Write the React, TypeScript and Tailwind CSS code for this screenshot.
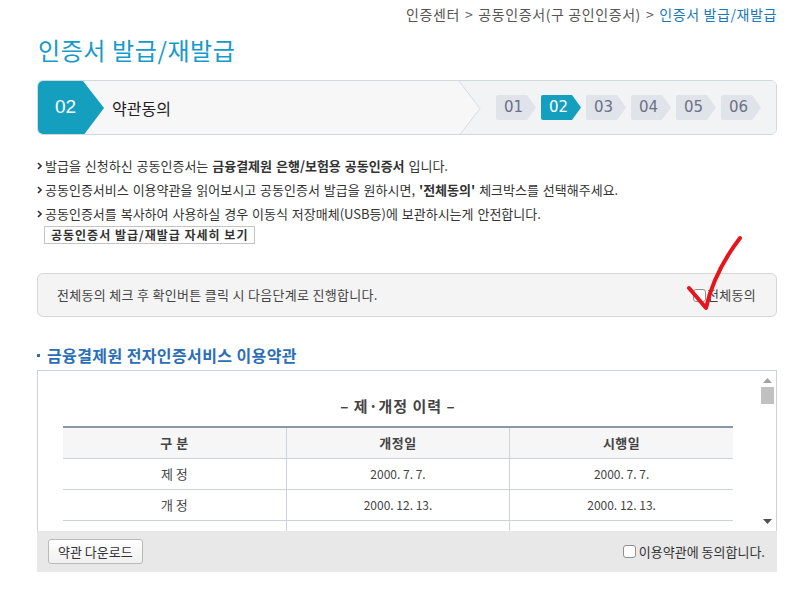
import React from 'react'

const FONT = "font-['Noto_Sans_CJK_KR','Noto_Sans',sans-serif]"

function StepBadge({ n, active }: { n: string; active?: boolean }) {
  return (
    <div className="relative w-[40px] h-[25px]">
      <svg width="40" height="25" className="absolute inset-0">
        <path d="M2 0 H31 L40 12.5 L31 25 H2 Q0 25 0 23 V2 Q0 0 2 0 Z" fill={active ? '#149fbf' : '#e0e3ea'} />
      </svg>
      <span
        className={`relative block pl-[8px] leading-[25px] text-[15px] font-['DejaVu_Sans',sans-serif] ${active ? 'text-white' : 'text-[#6b7186]'}`}
      >
        {n}
      </span>
    </div>
  )
}

function Bullet({ children }: { children: React.ReactNode }) {
  return (
    <li className="flex items-center h-[24px]">
      <svg width="5" height="8" className="mr-[3px] shrink-0">
        <path d="M1 1 L4 4 L1 7" fill="none" stroke="#333" strokeWidth="1.6" />
      </svg>
      <span>{children}</span>
    </li>
  )
}

function Checkbox() {
  return <span className="inline-block w-[13px] h-[13px] rounded-[3px] border border-[#8f8f8f] bg-white shrink-0" />
}

const rows = [
  ['제 정', '2000. 7. 7.', '2000. 7. 7.'],
  ['개 정', '2000. 12. 13.', '2000. 12. 13.'],
  ['', '', ''],
]

export default function App() {
  return (
    <div className={`relative w-[794px] h-[600px] bg-white overflow-hidden text-[#333] ${FONT}`}>
      <div className="ml-[37px] w-[740px]">
        {/* breadcrumb */}
        <div className="flex justify-end items-center h-[28px] text-[14px] tracking-[0.6px] text-[#555]">
          <span>인증센터</span>
          <span className="mx-[5px]">&gt;</span>
          <span>공동인증서(구 공인인증서)</span>
          <span className="mx-[5px]">&gt;</span>
          <span className="text-[#1a78b8]">인증서 발급/재발급</span>
        </div>

        <h1 className="mt-[7px] h-[30px] leading-[30px] text-[24px] tracking-[0.6px] text-[#169ac8] pl-[1px]">인증서 발급/재발급</h1>

        {/* step bar */}
        <div className="mt-[15px] flex h-[55px] rounded-[6px] border border-[#d3d8df] overflow-hidden">
          <div className="flex-1 flex items-center bg-[#f7f7f7]">
            <div className="relative w-[66px] h-full shrink-0">
              <svg width="66" height="55" className="absolute inset-0">
                <path d="M0 0 H45 L66 27 L45 55 H0 Z" fill="#149fbf" />
              </svg>
              <span className="relative flex h-full items-center pl-[17px] text-white text-[19px] font-['Liberation_Sans',sans-serif]">02</span>
            </div>
            <span className="ml-[8px] text-[16px] text-[#222]">약관동의</span>
          </div>
          <svg width="24" height="55" className="shrink-0 bg-[#f2f3f5]">
            <path d="M0 0 H1 L22 27.5 L1 55 H0 Z" fill="#f7f7f7" />
            <path d="M1 0 L22 27.5 L1 55" fill="none" stroke="#d8dbe0" strokeWidth="1" />
          </svg>
          <div className="flex items-center gap-[5px] bg-[#f2f3f5] pl-[14px] pr-[15px]">
            <StepBadge n="01" />
            <StepBadge n="02" active />
            <StepBadge n="03" />
            <StepBadge n="04" />
            <StepBadge n="05" />
            <StepBadge n="06" />
          </div>
        </div>

        {/* notes */}
        <ul className="mt-[19px] text-[13px] text-[#333] [word-spacing:1px]">
          <Bullet>
            발급을 신청하신 공동인증서는 <b className="font-bold">금융결제원 은행/보험용 공동인증서</b> 입니다.
          </Bullet>
          <Bullet>
            공동인증서비스 이용약관을 읽어보시고 공동인증서 발급을 원하시면, <b className="font-bold">'전체동의'</b> 체크박스를 선택해주세요.
          </Bullet>
          <Bullet>공동인증서를 복사하여 사용하실 경우 이동식 저장매체(USB등)에 보관하시는게 안전합니다.</Bullet>
        </ul>
        <button className="block ml-[7px] h-[18px] px-[6px] border border-[#c4c4c4] bg-white text-[12px] tracking-[1px] font-bold leading-[16px] text-[#333]">
          공동인증서 발급/재발급 자세히 보기
        </button>

        {/* notice */}
        <div className="mt-[29px] flex items-center justify-between h-[44px] rounded-[6px] border border-[#d6d6d6] bg-[#f4f4f4] pl-[19px] pr-[20px] text-[13px] tracking-[0.3px] text-[#444]">
          <span>전체동의 체크 후 확인버튼 클릭 시 다음단계로 진행합니다.</span>
          <label className="flex items-center gap-[1px]">
            <Checkbox />
            <span>전체동의</span>
          </label>
        </div>

        {/* terms */}
        <h2 className="mt-[28px] flex items-center h-[20px] text-[16px] tracking-[0.4px] font-bold text-[#2b6eb6]">
          <span className="w-[3px] h-[3px] bg-[#2b6eb6] mr-[7px]" />
          금융결제원 전자인증서비스 이용약관
        </h2>
        <div className="mt-[5px] flex h-[161px] border-t border-x border-[#ccd2da] bg-white">
          <div className="flex-1 overflow-hidden pl-[25px] pr-[26px]">
            <div className="pt-[25px] h-[55px] text-center text-[15px] tracking-[1px] font-bold text-[#444] leading-[20px]">– 제·개정 이력 –</div>
            <table className="w-full border-collapse border-t-2 border-[#8d96a5] text-[12px] text-[#444] table-fixed">
              <thead>
                <tr className="h-[31px] bg-[#f6f6f6]">
                  <th className="border-b border-[#ccd3db] font-bold text-[13px] tracking-[0.5px]">구 분</th>
                  <th className="border-b border-l border-[#ccd3db] font-bold text-[13px] tracking-[0.5px]">개정일</th>
                  <th className="border-b border-l border-[#ccd3db] font-bold text-[13px] tracking-[0.5px]">시행일</th>
                </tr>
              </thead>
              <tbody>
                {rows.map((r, i) => (
                  <tr key={i} className="h-[31px]">
                    <td className="border-b border-[#ccd3db] text-center text-[13px]">{r[0]}</td>
                    <td className="border-b border-l border-[#ccd3db] text-center">{r[1]}</td>
                    <td className="border-b border-l border-[#ccd3db] text-center">{r[2]}</td>
                  </tr>
                ))}
              </tbody>
            </table>
          </div>
          <div className="w-[17px] flex flex-col items-center bg-white">
            <svg width="9" height="5" className="mt-[7px]">
              <path d="M0 5 L4.5 0 L9 5 Z" fill="#a3a3a3" />
            </svg>
            <div className="mt-[4px] w-[13px] h-[17px] bg-[#c1c1c1]" />
            <div className="flex-1" />
            <svg width="9" height="5" className="mb-[7px]">
              <path d="M0 0 L4.5 5 L9 0 Z" fill="#505050" />
            </svg>
          </div>
        </div>
        <div className="flex items-center justify-between h-[41px] bg-[#e8e8e8] pl-[11px] pr-[12px]">
          <button className="h-[25px] px-[9px] rounded-[3px] border border-[#b9b9b9] bg-gradient-to-b from-white to-[#f0f0f0] text-[13px] text-[#333]">
            약관 다운로드
          </button>
          <label className="flex items-center gap-[3px] text-[13px] text-[#333]">
            <Checkbox />
            <span>이용약관에 동의합니다.</span>
          </label>
        </div>
      </div>

      {/* red hand-drawn check mark */}
      <svg width="794" height="600" className="absolute inset-0 pointer-events-none">
        <path d="M689 288 L706 308 Q714 272 740 238" fill="none" stroke="#e8141c" strokeWidth="4" strokeLinecap="round" strokeLinejoin="round" />
      </svg>
    </div>
  )
}
